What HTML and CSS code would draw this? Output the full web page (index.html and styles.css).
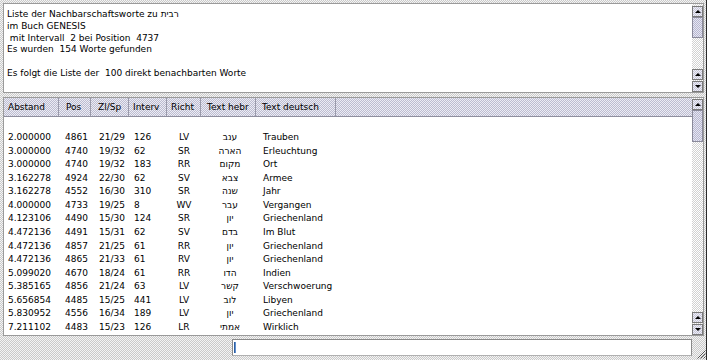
FILE: index.html
```html
<!DOCTYPE html>
<html>
<head>
<meta charset="utf-8">
<link rel="stylesheet" href="styles.css">
</head>
<body>
<div class="window">
  <div class="pane info">
    <div class="info-text"><div>Liste der Nachbarschaftsworte zu <span class="heb">רבית</span></div><div>im Buch GENESIS</div><div> mit Intervall  2 bei Position  4737</div><div>Es wurden  154 Worte gefunden</div><div>&nbsp;</div><div>Es folgt die Liste der  100 direkt benachbarten Worte</div></div>
    <div class="vscroll vs-info">
      <div class="sbtn up"></div>
      <div class="thumb"></div>
      <div class="track"></div>
      <div class="sbtn up"></div>
      <div class="sbtn down"></div>
    </div>
  </div>
  <div class="pane list">
    <div class="list-main">
      <div class="thead">
        <div class="th c1">Abstand</div>
        <div class="th c2">Pos</div>
        <div class="th c3">Zl/Sp</div>
        <div class="th c4">Interv</div>
        <div class="th c5">Richt</div>
        <div class="th c6">Text hebr</div>
        <div class="th c7">Text deutsch</div>
        <div class="th-fill"></div>
      </div>
      <div class="tbody">
        <div class="row"><span>2.000000</span><span>4861</span><span>21/29</span><span>126</span><span class="ctr">LV</span><span class="ctr heb">ענב</span><span>Trauben</span></div>
        <div class="row"><span>3.000000</span><span>4740</span><span>19/32</span><span>62</span><span class="ctr">SR</span><span class="ctr heb">הארה</span><span>Erleuchtung</span></div>
        <div class="row"><span>3.000000</span><span>4740</span><span>19/32</span><span>183</span><span class="ctr">RR</span><span class="ctr heb">מקום</span><span>Ort</span></div>
        <div class="row"><span>3.162278</span><span>4924</span><span>22/30</span><span>62</span><span class="ctr">SV</span><span class="ctr heb">צבא</span><span>Armee</span></div>
        <div class="row"><span>3.162278</span><span>4552</span><span>16/30</span><span>310</span><span class="ctr">SR</span><span class="ctr heb">שנה</span><span>Jahr</span></div>
        <div class="row"><span>4.000000</span><span>4733</span><span>19/25</span><span>8</span><span class="ctr">WV</span><span class="ctr heb">עבר</span><span>Vergangen</span></div>
        <div class="row"><span>4.123106</span><span>4490</span><span>15/30</span><span>124</span><span class="ctr">SR</span><span class="ctr heb">יון</span><span>Griechenland</span></div>
        <div class="row"><span>4.472136</span><span>4491</span><span>15/31</span><span>62</span><span class="ctr">SV</span><span class="ctr heb">בדם</span><span>Im Blut</span></div>
        <div class="row"><span>4.472136</span><span>4857</span><span>21/25</span><span>61</span><span class="ctr">RR</span><span class="ctr heb">יון</span><span>Griechenland</span></div>
        <div class="row"><span>4.472136</span><span>4865</span><span>21/33</span><span>61</span><span class="ctr">RV</span><span class="ctr heb">יון</span><span>Griechenland</span></div>
        <div class="row"><span>5.099020</span><span>4670</span><span>18/24</span><span>61</span><span class="ctr">RR</span><span class="ctr heb">הדו</span><span>Indien</span></div>
        <div class="row"><span>5.385165</span><span>4856</span><span>21/24</span><span>63</span><span class="ctr">LV</span><span class="ctr heb">קשר</span><span>Verschwoerung</span></div>
        <div class="row"><span>5.656854</span><span>4485</span><span>15/25</span><span>441</span><span class="ctr">LV</span><span class="ctr heb">לוב</span><span>Libyen</span></div>
        <div class="row"><span>5.830952</span><span>4556</span><span>16/34</span><span>189</span><span class="ctr">LV</span><span class="ctr heb">יון</span><span>Griechenland</span></div>
        <div class="row"><span>7.211102</span><span>4483</span><span>15/23</span><span>126</span><span class="ctr">LR</span><span class="ctr heb">אמתי</span><span>Wirklich</span></div>
      </div>
    </div>
    <div class="vscroll vs-list">
      <div class="sbtn up"></div>
      <div class="thumb"></div>
      <div class="track"></div>
      <div class="sbtn up"></div>
      <div class="sbtn down"></div>
    </div>
  </div>
  <div class="status">
    <div class="input"><span class="caret"></span></div>
  </div>
  <div class="grip">
    <svg width="10" height="10" viewBox="0 0 10 10"><path d="M9.5 1.5 L1.5 9.5 M9.5 4.5 L4.5 9.5 M9.5 7.5 L7.5 9.5" stroke="#555" stroke-width="1" fill="none"/></svg>
  </div>
</div>
</body>
</html>
```

FILE: styles.css
```css
* { box-sizing: border-box; }
html, body { margin: 0; padding: 0; }
body {
  width: 708px;
  height: 360px;
  overflow: hidden;
  font-family: "DejaVu Sans", sans-serif;
  font-size: 9px;
  color: #000;
  background: #fff;
}
.window {
  position: relative;
  width: 707px;
  height: 360px;
  border-right: 1px solid #2a2a2a;
  padding: 3px 2px 0 3px;
  display: flex;
  flex-direction: column;
  background: repeating-conic-gradient(#cacaca 0 25%, #f4f4f4 0 50%) 0 0 / 2px 2px;
}
.pane {
  border: 1px solid #9a9a9a;
  background: #fff;
  display: flex;
}
.info { height: 90px; flex: none; }
.info-text {
  flex: 1;
  padding: 5px 3px 0 3px;
  line-height: 11.8px;
  white-space: pre;
}
.heb { font-family: "DejaVu Sans", sans-serif; }

.vscroll {
  width: 11px;
  flex: none;
  display: flex;
  flex-direction: column;
  background: repeating-conic-gradient(#d2d2d2 0 25%, #ffffff 0 50%) 0 0 / 2px 2px;
}
.vs-info { padding-top: 2px; }
.vs-list { padding-top: 1px; }
.sbtn {
  height: 11px;
  flex: none;
  border: 1px solid #7a7a7a;
  background: repeating-conic-gradient(#c6c6d8 0 25%, #eeeef6 0 50%) 0 0 / 2px 2px;
  display: flex;
  align-items: center;
  justify-content: center;
}
.sbtn::after {
  content: "";
  width: 0;
  height: 0;
  border-left: 3px solid transparent;
  border-right: 3px solid transparent;
}
.sbtn.up::after { border-bottom: 3px solid #000; }
.sbtn.down::after { border-top: 3px solid #000; }
.sbtn.down { margin-top: 1px; }
.thumb {
  flex: none;
  border: 1px solid #8a8a9a;
  background: repeating-conic-gradient(#b8b8d0 0 25%, #e6e6f2 0 50%) 0 0 / 2px 2px;
}
.vs-info .thumb { height: 21px; }
.vs-list .thumb { height: 32px; }
.track { flex: 1; }

.list {
  margin-top: 4px;
  height: 239px;
  flex: none;
}
.list-main {
  flex: 1;
  display: flex;
  flex-direction: column;
  overflow: hidden;
}
.thead {
  height: 19px;
  flex: none;
  display: flex;
  border-bottom: 1px solid #8e8e9e;
  background: repeating-conic-gradient(#bcbcd0 0 25%, #ececf4 0 50%) 0 0 / 2px 2px;
}
.th {
  flex: none;
  line-height: 18px;
  padding-left: 4px;
  border-right: 1px solid #9a9aaa;
  white-space: nowrap;
}
.th.c1 { width: 55px; }
.th.c2 { width: 32px; padding-left: 7px; }
.th.c3 { width: 38px; padding-left: 7px; }
.th.c4 { width: 38px; }
.th.c5 { width: 34px; }
.th.c6 { width: 55px; padding-left: 6px; }
.th.c7 { width: 80px; padding-left: 6px; }
.th-fill { flex: 1; }

.tbody { padding-top: 14px; }
.row {
  display: grid;
  grid-template-columns: 57px 34px 35px 33px 34px 58px 1fr;
  padding-left: 4px;
  line-height: 13.57px;
  height: 13.57px;
  white-space: nowrap;
}
.row .ctr { text-align: center; }
.row span:last-child { padding-left: 4px; }

.status {
  flex: 1;
  display: flex;
  align-items: flex-start;
}
.input {
  margin-top: 3px;
  margin-left: 229px;
  width: 460px;
  height: 17px;
  background: #fff;
  border: 1px solid #8a8a8a;
  border-bottom-color: #b0b0b0;
  padding: 2px 1px;
  display: flex;
}
.caret {
  width: 2px;
  height: 11px;
  background: #5f8fd0;
  border-left: 1px solid #2f5f9f;
}
.grip {
  position: absolute;
  right: 0;
  bottom: 1px;
  width: 10px;
  height: 10px;
  line-height: 0;
}
```
